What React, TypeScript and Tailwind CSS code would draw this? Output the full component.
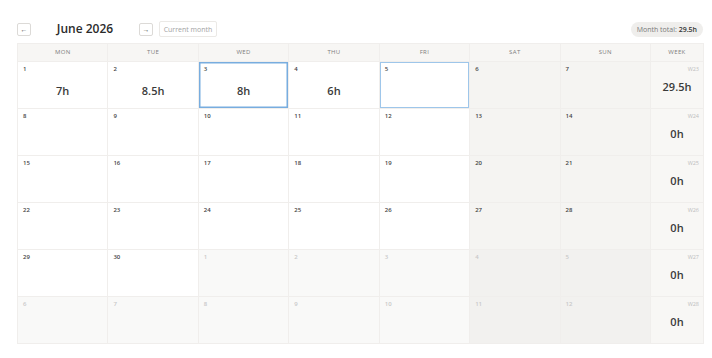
type Day = { n: number; inMonth: boolean; hours?: string; mark?: 'selected' | 'today' };

const weeks: { label: string; total: string; days: Day[] }[] = [
  {
    label: 'W23',
    total: '29.5h',
    days: [
      { n: 1, inMonth: true, hours: '7h' },
      { n: 2, inMonth: true, hours: '8.5h' },
      { n: 3, inMonth: true, hours: '8h', mark: 'selected' },
      { n: 4, inMonth: true, hours: '6h' },
      { n: 5, inMonth: true, mark: 'today' },
      { n: 6, inMonth: true },
      { n: 7, inMonth: true },
    ],
  },
  { label: 'W24', total: '0h', days: [8, 9, 10, 11, 12, 13, 14].map((n) => ({ n, inMonth: true })) },
  { label: 'W25', total: '0h', days: [15, 16, 17, 18, 19, 20, 21].map((n) => ({ n, inMonth: true })) },
  { label: 'W26', total: '0h', days: [22, 23, 24, 25, 26, 27, 28].map((n) => ({ n, inMonth: true })) },
  {
    label: 'W27',
    total: '0h',
    days: [29, 30, 1, 2, 3, 4, 5].map((n, i) => ({ n, inMonth: i < 2 })),
  },
  { label: 'W28', total: '0h', days: [6, 7, 8, 9, 10, 11, 12].map((n) => ({ n, inMonth: false })) },
];

const headers = ['MON', 'TUE', 'WED', 'THU', 'FRI', 'SAT', 'SUN', 'WEEK'];

function cellBg(d: Day, i: number) {
  const weekend = i >= 5;
  if (d.inMonth) return weekend ? 'bg-[#f5f4f2]' : 'bg-white';
  return weekend ? 'bg-[#f2f1ef]' : 'bg-[#f9f9f8]';
}

export default function App() {
  return (
    <div className="h-[358px] w-[712px] bg-white font-['Open_Sans',sans-serif] text-[#333]">
      {/* Toolbar */}
      <div className="flex h-[37px] items-end pl-[17px] pr-[9px]">
        <div className="flex h-[16px] w-full items-center">
          <button className="flex h-[13px] w-[14px] items-center justify-center rounded-[2px] border border-[#dcdad7] text-[7px] leading-none text-[#555]">
            ←
          </button>
          <div className="w-[108px] text-center text-[12px] font-semibold leading-none text-[#2b2b2b]">June 2026</div>
          <button className="flex h-[13px] w-[14px] items-center justify-center rounded-[2px] border border-[#dcdad7] text-[7px] leading-none text-[#555]">
            →
          </button>
          <button className="ml-[6px] flex h-[16px] w-[58px] items-center justify-center rounded-[2px] border border-[#ebe9e6] text-[7px] leading-none text-[#a3a3a3]">
            Current month
          </button>
          <div className="ml-auto flex h-[15px] items-center rounded-full bg-[#efeeec] px-[6px] text-[7px] leading-none text-[#7a7a7a]">
            Month total:&nbsp;<span className="font-semibold text-[#333]">29.5h</span>
          </div>
        </div>
      </div>

      {/* Calendar grid */}
      <div className="ml-[17px] mt-[6px] grid w-[687px] grid-cols-[repeat(7,minmax(0,1fr))_53px] border-l border-t border-[#f0eeec]">
        {headers.map((h) => (
          <div
            key={h}
            className="flex h-[18px] items-center justify-center border-b border-r border-[#f0eeec] bg-[#f7f6f4] text-[6px] tracking-[0.06em] text-[#7d7d7d]"
          >
            {h}
          </div>
        ))}

        {weeks.map((w) => (
          <div key={w.label} className="contents">
            {w.days.map((d, i) => (
              <div
                key={i}
                className={`flex h-[47px] flex-col border-b border-r border-[#f0eeec] pl-[5px] pt-[4px] ${cellBg(d, i)} ${
                  d.mark === 'selected'
                    ? 'shadow-[inset_0_0_0_1.5px_#78addf]'
                    : d.mark === 'today'
                      ? 'shadow-[inset_0_0_0_1px_#9ec6ea]'
                      : ''
                }`}
              >
                <span className={`text-[6px] font-semibold leading-[6px] ${d.inMonth ? 'text-[#444]' : 'text-[#c8c8c8]'}`}>
                  {d.n}
                </span>
                {d.hours && (
                  <span className="mt-[12px] pr-[5px] text-center text-[11px] font-semibold leading-[14px] text-[#3a3a3a]">
                    {d.hours}
                  </span>
                )}
              </div>
            ))}
            <div className="flex h-[47px] flex-col border-b border-r border-[#f0eeec] bg-[#f8f7f5] pt-[4px]">
              <span className="pr-[4px] text-right text-[5.5px] leading-[6px] text-[#bdbdbd]">{w.label}</span>
              <span className="mt-[8px] text-center text-[11px] font-semibold leading-[14px] text-[#3a3a3a]">{w.total}</span>
            </div>
          </div>
        ))}
      </div>
    </div>
  );
}
